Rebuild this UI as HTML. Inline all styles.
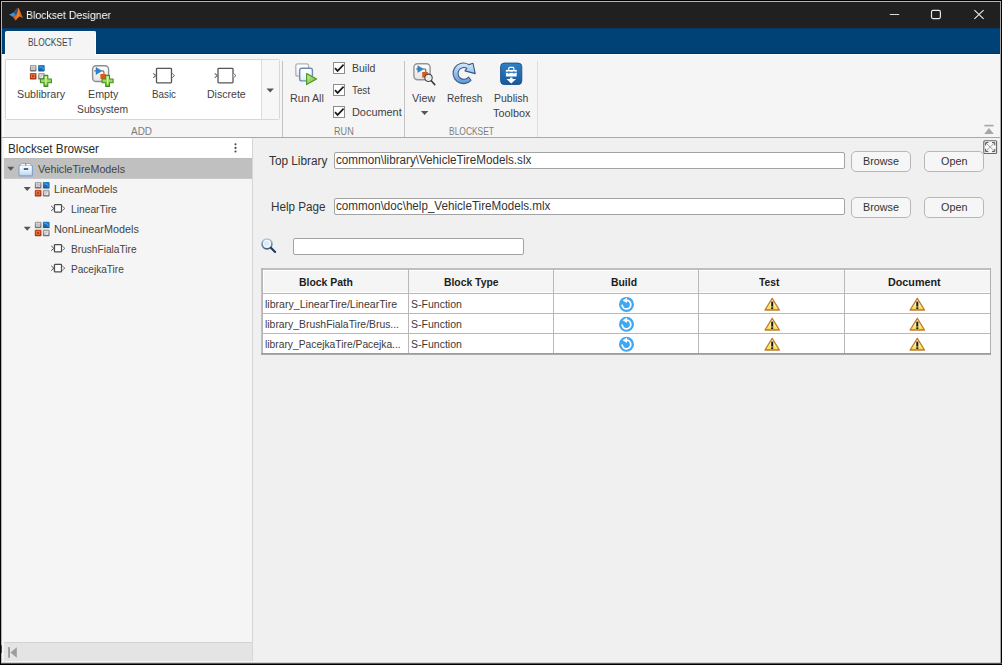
<!DOCTYPE html>
<html>
<head>
<meta charset="utf-8">
<title>Blockset Designer</title>
<style>
*{box-sizing:border-box;margin:0;padding:0}
html,body{width:1002px;height:665px;overflow:hidden;background:#000;font-family:"Liberation Sans",sans-serif;}
#win{position:absolute;left:0;top:0;width:1002px;height:665px;background:#000;overflow:hidden}
#win>div{position:absolute}
.t{position:absolute;line-height:1;white-space:pre;transform-origin:0 50%;}
#ov{position:absolute;left:0;top:0;width:1002px;height:665px}
</style>
</head>
<body>
<div id="win">
<div style="left:1px;top:1px;width:1000px;height:663px;background:#b4b4b4"></div>
<div style="left:2px;top:2px;width:998px;height:661px;background:#f0f0f0"></div>
<div style="left:999px;top:138px;width:1px;height:525px;background:#f8f8f8"></div>
<div style="left:253px;top:662px;width:747px;height:1px;background:#f8f8f8"></div>
<div style="left:2px;top:2px;width:998px;height:26px;background:#202020"></div>
<div style="left:2px;top:28px;width:998px;height:26px;background:#004275;border-top:1px solid #003a68;border-bottom:1px solid #00355f"></div>
<div style="left:5px;top:31px;width:91px;height:24px;background:#f5f5f5;border:1px solid #ffffff;border-bottom:none;border-radius:2px 2px 0 0"></div>
<div style="left:2px;top:54px;width:998px;height:83px;background:#f5f5f5"></div>
<div style="left:2px;top:54px;width:4px;height:1px;background:#ffffff"></div>
<div style="left:95px;top:54px;width:905px;height:1px;background:#ffffff"></div>
<div style="left:2px;top:137px;width:998px;height:1px;background:#a9a9a9"></div>
<div style="left:5px;top:59px;width:275px;height:61px;background:#fff;border:1px solid #d7d7d7;border-radius:1.5px"></div>
<div style="left:261px;top:60px;width:18px;height:59px;background:#f7f7f7;border-left:1px solid #dcdcdc;border-radius:0 2px 2px 0"></div>
<div style="left:282px;top:61px;width:1px;height:76px;background:#c3c3c3"></div>
<div style="left:404px;top:61px;width:1px;height:76px;background:#c3c3c3"></div>
<div style="left:537px;top:61px;width:1px;height:76px;background:#dedede"></div>
<div style="left:2px;top:138px;width:250px;height:524px;background:#f5f5f5"></div>
<div style="left:2px;top:138px;width:250px;height:20px;background:#ffffff"></div>
<div style="left:2px;top:158px;width:250px;height:21px;background:#c0c0c0;border-top:1px solid #bbbbbb;border-bottom:1px solid #c9c9c9"></div>
<div style="left:2px;top:642px;width:250px;height:21px;background:#e4e4e4;border-top:1px solid #d2d2d2"></div>
<div style="left:252px;top:138px;width:1px;height:524px;background:#d6d6d6"></div>
<div style="left:253px;top:138px;width:747px;height:524px;background:#f0f0f0"></div>
<div style="left:334px;top:152px;width:511px;height:17px;background:#fff;border:1px solid #a3a3a3;border-radius:2px"></div>
<div style="left:334px;top:198px;width:511px;height:17px;background:#fff;border:1px solid #a3a3a3;border-radius:2px"></div>
<div style="left:293px;top:238px;width:231px;height:17px;background:#fff;border:1px solid #a3a3a3;border-radius:2px"></div>
<div style="left:851px;top:151px;width:60px;height:21px;background:#f6f6f6;border:1px solid #b7b7b7;border-radius:5px"></div>
<div style="left:924px;top:151px;width:60px;height:21px;background:#f6f6f6;border:1px solid #b7b7b7;border-radius:5px"></div>
<div style="left:851px;top:197px;width:60px;height:21px;background:#f6f6f6;border:1px solid #b7b7b7;border-radius:5px"></div>
<div style="left:924px;top:197px;width:60px;height:21px;background:#f6f6f6;border:1px solid #b7b7b7;border-radius:5px"></div>
<div style="left:262px;top:268px;width:729px;height:86px;background:#fff"></div>
<div style="left:262px;top:268px;width:729px;height:26px;background:#f5f5f5"></div>
<div style="left:2px;top:138px;width:1.5px;height:524px;background:#f4f4f4;opacity:.9"></div>
<div style="left:2px;top:55px;width:2px;height:82px;background:#fbfbfb"></div>
<div style="left:2px;top:661px;width:998px;height:1px;background:#f5f5f5"></div>
<div style="left:1px;top:662px;width:1000px;height:1px;background:#cecece"></div>
<div style="left:1px;top:663px;width:1001px;height:1px;background:#545454"></div>
<div style="left:1000px;top:2px;width:1px;height:661px;background:#a6a6a6"></div>
<div style="left:1px;top:645px;width:1.4px;height:8px;background:#1d3f72;border-radius:1px;opacity:.85"></div>
<svg id="ov" width="1002" height="665" viewBox="0 0 1002 665">
<defs>
<linearGradient id="gPlus" x1="0" y1="0" x2="0" y2="1"><stop offset="0" stop-color="#c8f08c"/><stop offset="1" stop-color="#6ebe32"/></linearGradient>
<linearGradient id="gBox" x1="0" y1="0" x2="0" y2="1"><stop offset="0" stop-color="#ffffff"/><stop offset="1" stop-color="#e4e4e4"/></linearGradient>
<linearGradient id="gBlueBox" x1="0" y1="0" x2="0" y2="1"><stop offset="0" stop-color="#ffffff"/><stop offset="0.5" stop-color="#f6f9fd"/><stop offset="1" stop-color="#dde8f5"/></linearGradient>
<linearGradient id="gPub" x1="0" y1="0" x2="0" y2="1"><stop offset="0" stop-color="#2f80c4"/><stop offset="1" stop-color="#17589a"/></linearGradient>
<linearGradient id="gRef" x1="0" y1="0" x2="0" y2="1"><stop offset="0" stop-color="#d8eafc"/><stop offset="1" stop-color="#5a96d6"/></linearGradient>
<linearGradient id="gWarn" x1="0" y1="0" x2="0" y2="1"><stop offset="0" stop-color="#ffffff"/><stop offset="0.55" stop-color="#fbf0a0"/><stop offset="1" stop-color="#f2d83c"/></linearGradient>
<linearGradient id="gPkg" x1="0" y1="0" x2="0" y2="1"><stop offset="0" stop-color="#fbfdff"/><stop offset="0.5" stop-color="#e2eefa"/><stop offset="1" stop-color="#b8d4ee"/></linearGradient>
<linearGradient id="gPlay" x1="0" y1="0" x2="1" y2="1"><stop offset="0" stop-color="#d2f0a0"/><stop offset="1" stop-color="#64b432"/></linearGradient>
<linearGradient id="gGray" x1="0" y1="0" x2="0" y2="1"><stop offset="0" stop-color="#a8a8a8"/><stop offset="1" stop-color="#6e6e6e"/></linearGradient>
<linearGradient id="gBlu" x1="0" y1="0" x2="0" y2="1"><stop offset="0" stop-color="#2482d0"/><stop offset="1" stop-color="#0f5a9e"/></linearGradient>
<linearGradient id="gRed" x1="0" y1="0" x2="0" y2="1"><stop offset="0" stop-color="#cc4a22"/><stop offset="1" stop-color="#a8300e"/></linearGradient>
<linearGradient id="gLens" x1="0" y1="0" x2="0" y2="1"><stop offset="0" stop-color="#a4cbea"/><stop offset="1" stop-color="#48607e"/></linearGradient>
<!-- plus sign 12x12 -->
<g id="plus"><path d="M4.2 0.6h3.8v3.6h3.6v3.8h-3.6v3.6h-3.8v-3.6h-3.6v-3.8h3.6z" fill="url(#gPlus)" stroke="#3f8f22" stroke-width="1.1" stroke-linejoin="round"/><path d="M5.5 2.2h1.2v7.6h-1.2z" fill="#e8fbd0" opacity=".8"/></g>
<!-- library 2x2 icon 15x15 -->
<g id="lib">
<rect x="0" y="0" width="6.6" height="6.4" rx=".8" fill="url(#gGray)"/><rect x="1.3" y="1.2" width="4" height="3.8" fill="#e6e6e6"/><path d="M2.2 2.2h2.2v2H2.2z" fill="none" stroke="#9a9a9a" stroke-width=".6"/>
<rect x="8.2" y="0" width="6.6" height="6.4" rx=".8" fill="url(#gBlu)"/><path d="M9.6 2h2.4l1.2 1.4v1.4" fill="none" stroke="#6cb4ec" stroke-width=".8"/>
<rect x="0" y="8.1" width="6.6" height="6.4" rx=".8" fill="url(#gRed)"/><rect x="1.7" y="9.7" width="3" height="3" fill="none" stroke="#e08058" stroke-width=".8"/>
<rect x="8.2" y="8.1" width="6.6" height="6.4" rx=".8" fill="url(#gGray)"/><rect x="9.5" y="9.3" width="4" height="3.8" fill="#e9e9e9"/><path d="M10.4 11.8l2-1.8" stroke="#8a8a8a" stroke-width=".7"/>
</g>
<!-- small block icon 14x10 -->
<g id="blk" fill="none" stroke="#4e4e4e">
<rect x="3.45" y="1.45" width="7.1" height="7.4" rx=".7" stroke-width="1.3" fill="#fdfdfd"/>
<path d="M0.2 2.8l2.7 2.4 -2.7 2.4" stroke-width="1"/>
<path d="M11.3 3.1l2.6 2.1 -2.6 2.1" stroke-width="0.9" stroke="#666" fill="#fafafa"/>
</g>
<!-- gallery block icon 22x16 -->
<g id="gblk" fill="none" stroke="#565656">
<rect x="3.7" y="0.7" width="15" height="14.6" rx=".8" stroke-width="1.3" fill="#ffffff"/>
<path d="M0.4 5.8l2.6 2.2 -2.6 2.2" stroke-width="1.1" stroke="#6a6a6a"/>
<path d="M19.3 5.9l2.4 2.1 -2.4 2.1" stroke-width="1" stroke="#6a6a6a" fill="#fff"/>
</g>
<!-- warning 16x14 -->
<g id="warn">
<path d="M8 0.9L15.2 12.6H0.8z" fill="url(#gWarn)" stroke="#c27a2c" stroke-width="1.3" stroke-linejoin="round"/>
<path d="M7 4.2h2v5h-2z" fill="#1c1c1c"/><rect x="7" y="9.9" width="2" height="1.7" fill="#1c1c1c"/>
</g>
<!-- build 15x15 -->
<g id="bld">
<circle cx="7.5" cy="7.5" r="7.5" fill="#3fa7f2"/>
<path d="M7.4 3.4A4.3 4.3 0 1 1 3.2 8.4" fill="none" stroke="#fff" stroke-width="1.8" stroke-linecap="round"/>
<path d="M3.6 3.5L8 0.8V6.2z" fill="#fff"/>
</g>
<!-- tree arrow -->
<path id="tri" d="M0 0h7l-3.5 4z" fill="#555"/>
</defs>

<!-- matlab logo -->
<g transform="translate(9,7.5)">
<path d="M0 7.2L4.4 5 7.2 7.4 4 9.4z" fill="#3a92d8"/>
<path d="M4.4 5C6.4 3 7.6 0.4 9.6 0.2 11 2.6 12.4 7.6 14.2 10.8 12.4 9.8 11.4 8.6 9.8 9.6 8.4 10.6 7.4 12.2 6.4 13 5.6 11.6 4.8 10.2 4 9.4L7.2 7.4z" fill="#e0661c"/>
<path d="M4.4 5C6.4 3 7.6 0.4 9.6 0.2 9 3 8.2 5.6 7.2 7.4z" fill="#1d4f8f" opacity=".95"/>
<path d="M9.6 0.2C10.6 3.4 10.8 7 9.8 9.6 8.4 10.6 7.4 12.2 6.4 13 7.6 9.8 9 5 9.6 0.2z" fill="#f08a2c" opacity=".8"/>
</g>
<!-- window controls -->
<path d="M889.8 14.5h9.4" stroke="#d8d8d8" stroke-width="1"/>
<rect x="931.5" y="10.4" width="8.9" height="8.2" rx="1.5" fill="none" stroke="#ececec" stroke-width="1.15"/>
<path d="M974.4 10.2l9.2 8.7M983.6 10.2l-9.2 8.7" stroke="#ececec" stroke-width="1.1"/>

<!-- Sublibrary icon -->
<use href="#lib" transform="translate(29.9,65)"/>
<use href="#plus" transform="translate(39.8,74.8)"/>
<!-- Empty subsystem icon -->
<rect x="92.6" y="65.7" width="16" height="15.8" rx="3.6" fill="url(#gBox)" stroke="#8e8e8e" stroke-width="1.4"/>
<path d="M94.3 70.9h2M101.5 70.9h1.2q1.2 0 1.2 1.2v2" stroke="#707070" stroke-width="1.1" fill="none"/>
<path d="M96 67.4l5.8 3.5 -5.8 3.5z" fill="#2c86d0" stroke="#1c6cb4" stroke-width=".5"/>
<rect x="100.4" y="74" width="5.4" height="5" fill="#d85a20"/>
<use href="#plus" transform="translate(101.5,74.8)"/>
<!-- Basic / Discrete -->
<use href="#gblk" transform="translate(152.8,67.6)"/>
<use href="#gblk" transform="translate(214.3,67.6)"/>
<!-- gallery dropdown arrow -->
<path d="M266.5 88.6h7.4l-3.7 4z" fill="#555"/>
<!-- Run All icon -->
<rect x="295.8" y="63.8" width="12.8" height="12.4" rx="2" fill="url(#gBlueBox)" stroke="#b2b2b2" stroke-width="1.3"/>
<rect x="299.7" y="68.3" width="12.7" height="12.6" rx="2" fill="url(#gBlueBox)" stroke="#6c8db8" stroke-width="1.4"/>
<path d="M306.6 73.6L316.6 79 306.6 84.6z" fill="url(#gPlay)" stroke="#4c9a2a" stroke-width="1.2" stroke-linejoin="round"/>
<!-- checkboxes -->
<g fill="#fff" stroke="#8c8c8c" stroke-width="1"><rect x="333.5" y="62.5" width="11" height="11"/><rect x="333.5" y="84.5" width="11" height="11"/><rect x="333.5" y="106.5" width="11" height="11"/></g>
<g fill="none" stroke="#1a1a1a" stroke-width="1.7"><path d="M335 68.1l2.6 2.8 6-6.2"/><path d="M335 90.1l2.6 2.8 6-6.2"/><path d="M335 112.1l2.6 2.8 6-6.2"/></g>
<!-- View icon -->
<rect x="413.9" y="63.7" width="16.2" height="16" rx="3.6" fill="url(#gBox)" stroke="#949494" stroke-width="1.4"/>
<path d="M416 69h2M423.2 69h1.4q1.2 0 1.2 1.2v2" stroke="#606060" stroke-width="1.1" fill="none"/>
<path d="M417.8 65.8l5.6 3.3 -5.6 3.3z" fill="#2c86d0" stroke="#1c6cb4" stroke-width=".5"/>
<rect x="422.2" y="72" width="5.6" height="5.6" fill="#d85a20"/>
<circle cx="428.5" cy="77.8" r="3.7" fill="#f2f4f6" fill-opacity=".85" stroke="#444" stroke-width="1.1"/>
<path d="M431.3 80.8l3.4 3.8" stroke="#3c3c3c" stroke-width="1.6" stroke-linecap="round"/>
<!-- View dropdown arrow -->
<path d="M420.9 110.9h7.4l-3.7 4z" fill="#555"/>
<!-- Refresh icon -->
<path d="M470.6 80.3A10.3 10.3 0 1 1 468.4 64.6L472.6 63.3 474.8 73.6 464.6 70.9 466.5 68.3A5.9 5.9 0 1 0 468.2 77z" fill="url(#gRef)" stroke="#38598a" stroke-width="1.1" transform="translate(0.4,0)" stroke-linejoin="round"/>
<!-- Publish icon -->
<rect x="500.6" y="63.1" width="21.2" height="21.4" rx="3.6" fill="url(#gPub)" stroke="#16508c" stroke-width=".9"/>
<path d="M508.7 70v-1.6q0-1 1-1h3.2q1 0 1 1v1.6" fill="none" stroke="#fff" stroke-width="1.1"/>
<rect x="505.9" y="69.9" width="10.8" height="6.6" fill="#fff"/>
<rect x="505.9" y="71.7" width="10.8" height="1.3" fill="#3a82c4"/>
<rect x="508" y="71.4" width="1.6" height="2.2" fill="#3a82c4"/><rect x="513" y="71.4" width="1.6" height="2.2" fill="#3a82c4"/>
<path d="M510.1 77.4h2.4v1.6h3.6l-4.8 4.6 -4.8-4.6h3.6z" fill="#fff"/>
<!-- collapse -->
<path d="M984.4 125.6h9.2" stroke="#a6a6a6" stroke-width="1.6"/><path d="M984.2 134h9.6l-4.8-6z" fill="#a6a6a6"/>
<!-- expand icon -->
<rect x="983.8" y="140.7" width="12.8" height="12.8" rx="1" fill="#f8f8f8" stroke="#666" stroke-width="1.1"/>
<path d="M986 143l8.4 8.2M994.4 143l-8.4 8.2" stroke="#9a9a9a" stroke-width=".9"/>
<path d="M985.6 145.4v-2.8h2.8M992 142.6h2.8v2.8M994.8 148.8v2.8h-2.8M988.4 151.6h-2.8v-2.8" fill="none" stroke="#555" stroke-width="1"/>

<!-- Blockset browser menu dots -->
<g fill="#484848"><circle cx="235.5" cy="144.3" r="1.05"/><circle cx="235.5" cy="147.9" r="1.05"/><circle cx="235.5" cy="151.5" r="1.05"/></g>
<!-- tree -->
<use href="#tri" transform="translate(7.2,166.7)"/>
<g transform="translate(18.4,162.9)">
<path d="M0.6 3.4q0-1 1-1H13q1 0 1 1V12q0 1-1 1H1.6q-1 0-1-1z" fill="url(#gPkg)" stroke="#7ea2cc" stroke-width="1.1"/>
<path d="M1.8 2.6l0.9-2h9.2l0.9 2" fill="#f6faff" stroke="#8eaed2" stroke-width="1"/>
<path d="M7.3 0.4v2.2" stroke="#5f7fa8" stroke-width="1"/>
<rect x="5.4" y="5.2" width="4.4" height="1.8" fill="#3f5577"/>
</g>
<use href="#tri" transform="translate(23.7,186.9)"/>
<rect x="34.9" y="182.1" width="14.6" height="14" rx="2" fill="#e3e3e3"/><use href="#lib" transform="translate(34.8,182)"/>
<use href="#blk" transform="translate(51,203.2)"/>
<use href="#tri" transform="translate(23.7,226.7)"/>
<rect x="34.9" y="221.8" width="14.6" height="14" rx="2" fill="#e3e3e3"/><use href="#lib" transform="translate(34.8,221.7)"/>
<use href="#blk" transform="translate(51,243.1)"/>
<use href="#blk" transform="translate(51,263)"/>
<!-- left footer icon -->
<rect x="8.1" y="647.1" width="1.9" height="10.7" fill="#9c9c9c"/><path d="M16.8 647.2v10.5l-6.4-5.25z" fill="#9c9c9c"/>

<!-- search icon -->
<circle cx="267" cy="243.9" r="4.9" fill="#f2f6fa" stroke="url(#gLens)" stroke-width="1.7"/>
<circle cx="266.6" cy="243.6" r="2.6" fill="#dfe9f2"/>
<path d="M270.9 247.8l4.2 4.2" stroke="#1e3a62" stroke-width="2.1" stroke-linecap="round"/>

<!-- table grid -->
<rect x="263" y="270" width="727" height="1" fill="#ffffff"/>
<rect x="263" y="292" width="727" height="1" fill="#ffffff"/>
<rect x="263" y="270" width="1" height="23" fill="#ffffff"/>
<g stroke="#b9b9b9" stroke-width="1" fill="none">
<path d="M262 293.5h729M262 313.5h729M262 333.5h729"/>
<path d="M408.5 269v85M553.5 269v85M698.5 269v85M844.5 269v85"/>
</g>
<rect x="261.2" y="268.1" width="729.8" height="1.8" fill="#b8b8b8"/>
<rect x="261.2" y="268.1" width="1.75" height="86.7" fill="#b4b4b4"/>
<rect x="990" y="268.1" width="1" height="86.7" fill="#b0b0b0"/>
<rect x="261.2" y="353" width="729.8" height="1.8" fill="#9c9c9c"/>
<!-- build icons -->
<use href="#bld" transform="translate(619,296.9)"/>
<use href="#bld" transform="translate(619,316.8)"/>
<use href="#bld" transform="translate(619,336.8)"/>
<!-- warnings -->
<use href="#warn" transform="translate(764.2,297.4)"/>
<use href="#warn" transform="translate(764.2,317.4)"/>
<use href="#warn" transform="translate(764.2,337.4)"/>
<use href="#warn" transform="translate(909.3,297.4)"/>
<use href="#warn" transform="translate(909.3,317.4)"/>
<use href="#warn" transform="translate(909.3,337.4)"/>
</svg>

<div class="t" style="left:25.80px;top:10px;font-size:11.5px;color:#ffffff;will-change:transform;transform:scaleX(0.9171);">Blockset Designer</div>
<div class="t" style="left:28.00px;top:37px;font-size:11px;color:#3c4650;transform:scaleX(0.7600);">BLOCKSET</div>
<div class="t" style="left:16.80px;top:89px;font-size:11.5px;color:#3f3f3f;transform:scaleX(0.9308);">Sublibrary</div>
<div class="t" style="left:87.70px;top:89px;font-size:11.5px;color:#3f3f3f;transform:scaleX(0.9296);">Empty</div>
<div class="t" style="left:76.80px;top:104px;font-size:11.5px;color:#3f3f3f;transform:scaleX(0.8965);">Subsystem</div>
<div class="t" style="left:152.40px;top:89px;font-size:11.5px;color:#3f3f3f;transform:scaleX(0.8533);">Basic</div>
<div class="t" style="left:206.60px;top:89px;font-size:11.5px;color:#3f3f3f;transform:scaleX(0.9173);">Discrete</div>
<div class="t" style="left:289.80px;top:93px;font-size:11.5px;color:#3f3f3f;transform:scaleX(0.9276);">Run All</div>
<div class="t" style="left:352.00px;top:63px;font-size:11.5px;color:#3f3f3f;transform:scaleX(0.9148);">Build</div>
<div class="t" style="left:352.00px;top:85px;font-size:11.5px;color:#3f3f3f;transform:scaleX(0.8533);">Test</div>
<div class="t" style="left:352.00px;top:107px;font-size:11.5px;color:#3f3f3f;transform:scaleX(0.9481);">Document</div>
<div class="t" style="left:412.30px;top:93px;font-size:11.5px;color:#3f3f3f;transform:scaleX(0.9386);">View</div>
<div class="t" style="left:446.70px;top:93px;font-size:11.5px;color:#3f3f3f;transform:scaleX(0.8763);">Refresh</div>
<div class="t" style="left:494.00px;top:93px;font-size:11.5px;color:#3f3f3f;transform:scaleX(0.9120);">Publish</div>
<div class="t" style="left:492.80px;top:108px;font-size:11.5px;color:#3f3f3f;transform:scaleX(0.9435);">Toolbox</div>
<div class="t" style="left:131.30px;top:126px;font-size:11px;color:#7d7d7d;transform:scaleX(0.9038);">ADD</div>
<div class="t" style="left:333.60px;top:126px;font-size:11px;color:#7d7d7d;transform:scaleX(0.8262);">RUN</div>
<div class="t" style="left:448.70px;top:126px;font-size:11px;color:#7d7d7d;transform:scaleX(0.7668);">BLOCKSET</div>
<div class="t" style="left:7.80px;top:143px;font-size:12px;color:#2b2b2b;transform:scaleX(0.9816);">Blockset Browser</div>
<div class="t" style="left:37.80px;top:164px;font-size:11.5px;color:#444444;transform:scaleX(0.9300);">VehicleTireModels</div>
<div class="t" style="left:54.40px;top:184px;font-size:11.5px;color:#444444;transform:scaleX(0.9211);">LinearModels</div>
<div class="t" style="left:70.70px;top:204px;font-size:11.5px;color:#444444;transform:scaleX(0.8918);">LinearTire</div>
<div class="t" style="left:54.30px;top:224px;font-size:11.5px;color:#444444;transform:scaleX(0.9408);">NonLinearModels</div>
<div class="t" style="left:70.60px;top:244px;font-size:11.5px;color:#444444;transform:scaleX(0.8822);">BrushFialaTire</div>
<div class="t" style="left:70.60px;top:264px;font-size:11.5px;color:#444444;transform:scaleX(0.8757);">PacejkaTire</div>
<div class="t" style="left:268.80px;top:155px;font-size:12px;color:#333333;transform:scaleX(0.9836);">Top Library</div>
<div class="t" style="left:271.20px;top:201px;font-size:12px;color:#333333;transform:scaleX(0.9742);">Help Page</div>
<div class="t" style="left:336.30px;top:154px;font-size:12px;color:#333333;transform:scaleX(0.9719);">common\library\VehicleTireModels.slx</div>
<div class="t" style="left:336.30px;top:200px;font-size:12px;color:#333333;transform:scaleX(0.9701);">common\doc\help_VehicleTireModels.mlx</div>
<div class="t" style="left:862.90px;top:156px;font-size:11px;color:#333333;transform:scaleX(0.9785);">Browse</div>
<div class="t" style="left:941.10px;top:156px;font-size:11px;color:#333333;transform:scaleX(0.9806);">Open</div>
<div class="t" style="left:862.90px;top:202px;font-size:11px;color:#333333;transform:scaleX(0.9785);">Browse</div>
<div class="t" style="left:941.10px;top:202px;font-size:11px;color:#333333;transform:scaleX(0.9806);">Open</div>
<div class="t" style="left:298.90px;top:277px;font-size:11.5px;color:#1c1c1c;font-weight:bold;transform:scaleX(0.9068);">Block Path</div>
<div class="t" style="left:444.30px;top:277px;font-size:11.5px;color:#1c1c1c;font-weight:bold;transform:scaleX(0.9008);">Block Type</div>
<div class="t" style="left:610.50px;top:277px;font-size:11.5px;color:#1c1c1c;font-weight:bold;transform:scaleX(0.9043);">Build</div>
<div class="t" style="left:759.10px;top:277px;font-size:11.5px;color:#1c1c1c;font-weight:bold;transform:scaleX(0.8905);">Test</div>
<div class="t" style="left:888.40px;top:277px;font-size:11.5px;color:#1c1c1c;font-weight:bold;transform:scaleX(0.9354);">Document</div>
<div class="t" style="left:265.00px;top:299px;font-size:11.5px;color:#3a3a3a;transform:scaleX(0.9200);">library_LinearTire/LinearTire</div>
<div class="t" style="left:265.00px;top:319px;font-size:11.5px;color:#3a3a3a;transform:scaleX(0.9025);">library_BrushFialaTire/Brus...</div>
<div class="t" style="left:265.00px;top:339px;font-size:11.5px;color:#3a3a3a;transform:scaleX(0.8945);">library_PacejkaTire/Pacejka...</div>
<div class="t" style="left:411.40px;top:299px;font-size:11.5px;color:#3a3a3a;transform:scaleX(0.9153);">S-Function</div>
<div class="t" style="left:411.40px;top:319px;font-size:11.5px;color:#3a3a3a;transform:scaleX(0.9153);">S-Function</div>
<div class="t" style="left:411.40px;top:339px;font-size:11.5px;color:#3a3a3a;transform:scaleX(0.9153);">S-Function</div>
</div>
</body>
</html>
